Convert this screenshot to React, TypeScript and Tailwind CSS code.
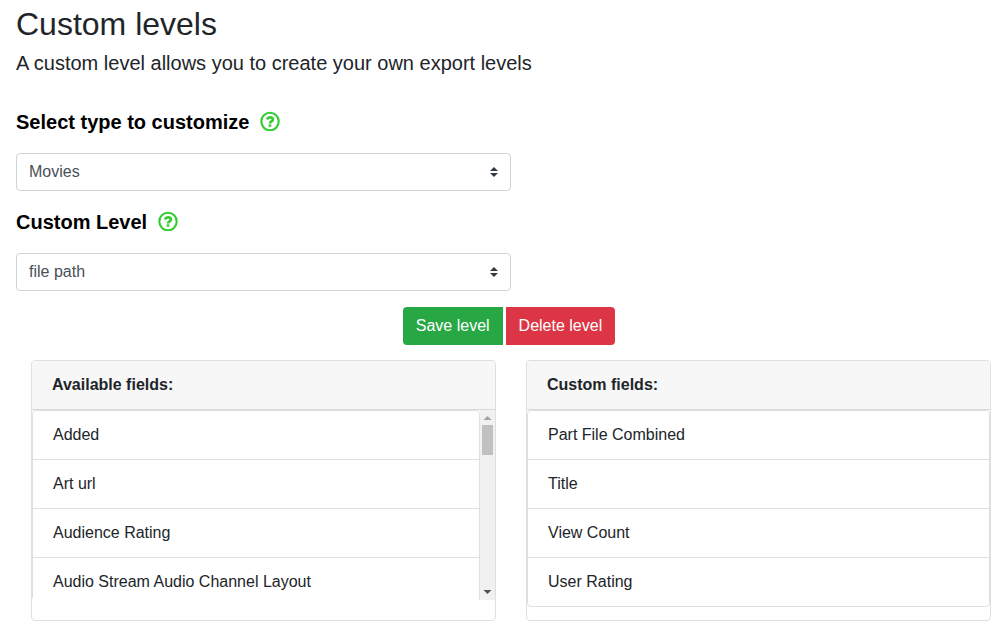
const availableFields = ["Added", "Art url", "Audience Rating", "Audio Stream Audio Channel Layout"];
const customFields = ["Part File Combined", "Title", "View Count", "User Rating"];

function HelpIcon() {
  return (
    <svg viewBox="0 0 20 20" className="mb-0.5 size-5 fill-none stroke-[#32cd32]" aria-hidden="true">
      <circle cx="10" cy="10.5" r="8.7" strokeWidth="2.1" />
      <path d="M6.900 8.300C7.600 6.900 8.700 6.300 10 6.300c1.700 0 2.900.9 2.900 2.200 0 2-2.900 1.900-2.900 3.900" strokeWidth="2.700" />
      <path d="M10 13.300v2.500" strokeWidth="2.700" />
    </svg>
  );
}

function LevelSelect({ id, label, value }: { id: string; label: string; value: string }) {
  return (
    <div>
      <div className="flex h-6 items-center gap-[11px]">
        <label htmlFor={id} className="text-xl leading-6 font-bold text-black">
          {label}
        </label>
        <HelpIcon />
      </div>
      <div className="mt-[19px] grid w-1/2 items-center">
        <select
          id={id}
          defaultValue={value}
          className="col-start-1 row-start-1 h-[38px] w-full appearance-none rounded border border-[#ced4da] bg-white pr-7 pl-3 text-base text-[#495057]"
        >
          <option>{value}</option>
        </select>
        <svg
          viewBox="0 0 4 5"
          className="pointer-events-none col-start-1 row-start-1 mr-[13px] h-2.5 w-2 justify-self-end fill-[#343a40]"
          aria-hidden="true"
        >
          <path d="M2 0L0 2h4zm0 5L0 3h4z" />
        </svg>
      </div>
    </div>
  );
}

function FieldList({ fields }: { fields: string[] }) {
  return (
    <ul className="min-w-0 grow rounded border border-[#dfdfdf] bg-white">
      {fields.map((field) => (
        <li key={field} className="h-[49px] border-b border-[#dfdfdf] px-5 py-3 leading-6 last:h-12 last:border-b-0">
          {field}
        </li>
      ))}
    </ul>
  );
}

function ScrollBar() {
  return (
    <div className="flex w-[15px] shrink-0 flex-col items-center bg-[#f1f1f1]" aria-hidden="true">
      <svg viewBox="0 0 15 15" className="size-[15px] fill-[#a3a3a3]">
        <path d="M7.5 6L11.5 10H3.5z" />
      </svg>
      <div className="h-[30px] w-[11px] bg-[#c1c1c1]" />
      <div className="grow" />
      <svg viewBox="0 0 15 15" className="size-[15px] fill-[#505050]">
        <path d="M7.5 9L3.5 5h8z" />
      </svg>
    </div>
  );
}

function FieldCard({ title, fields, scrolls = false }: { title: string; fields: string[]; scrolls?: boolean }) {
  return (
    <section className="h-[261px] rounded border border-[#dfdfdf] bg-white">
      <h2 className="rounded-t-[3px] border-b border-[#d8d8d8] bg-[#f7f7f7] px-5 py-3 leading-6 font-bold">{title}</h2>
      {scrolls ? (
        <div className="flex h-[190px] items-stretch overflow-hidden rounded-bl">
          <div className="min-w-0 grow overflow-hidden">
            <FieldList fields={fields} />
          </div>
          <ScrollBar />
        </div>
      ) : (
        <FieldList fields={fields} />
      )}
    </section>
  );
}

export default function App() {
  return (
    <div className="overflow-hidden bg-white font-['Liberation_Sans',Arial,sans-serif] text-base text-[#212529]">
      <main className="-mr-[13px] pt-[5px] pb-[3px] pl-4">
        <h1 className="text-[32px] leading-[38px]">Custom levels</h1>
        <p className="mt-[5px] text-xl leading-[30px]">A custom level allows you to create your own export levels</p>
        <div className="mt-8 flex flex-col gap-[19px]">
          <LevelSelect id="type" label="Select type to customize" value="Movies" />
          <LevelSelect id="level" label="Custom Level" value="file path" />
        </div>
        <div className="mt-4 flex justify-center gap-[3px] pr-1">
          <button type="button" className="h-[38px] rounded-l bg-[#28a745] px-[13px] text-white">
            Save level
          </button>
          <button type="button" className="h-[38px] rounded-r bg-[#dc3545] px-[13px] text-white">
            Delete level
          </button>
        </div>
        <div className="mt-[15px] grid grid-cols-2 gap-[30px] px-[15px]">
          <FieldCard title="Available fields:" fields={availableFields} scrolls />
          <FieldCard title="Custom fields:" fields={customFields} />
        </div>
      </main>
    </div>
  );
}
